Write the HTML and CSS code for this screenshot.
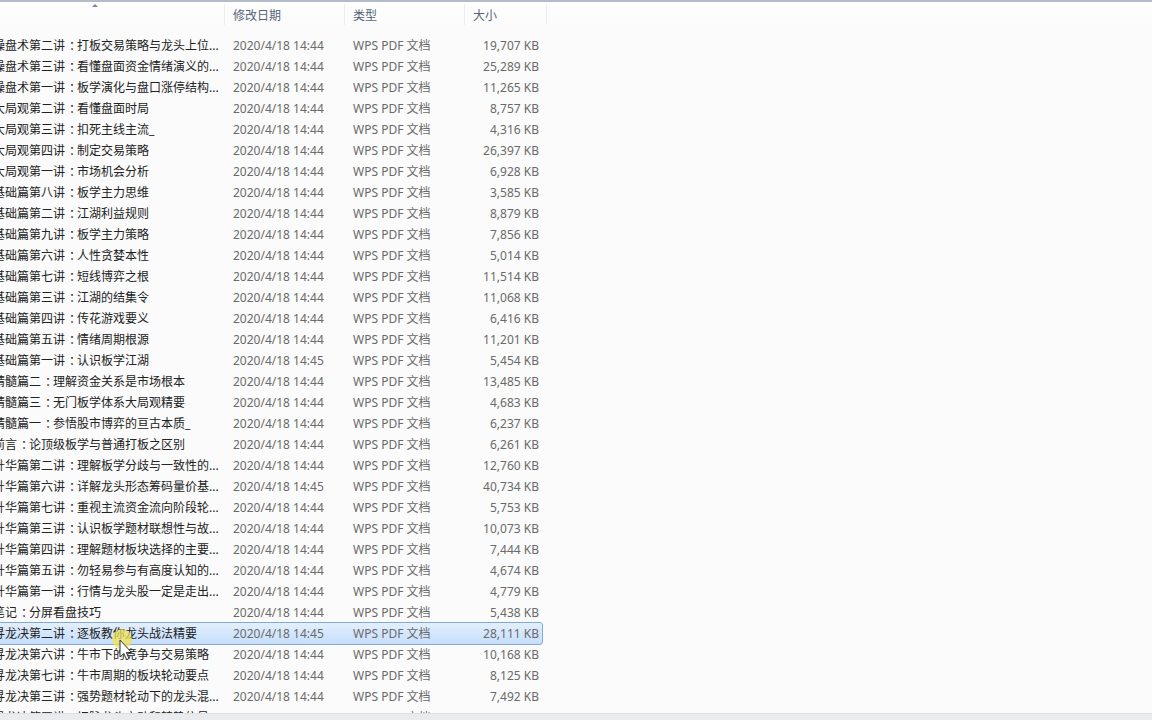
FILE: index.html
```html
<!DOCTYPE html>
<html lang="zh">
<head>
    <meta charset="UTF-8">
    <title>文件列表</title>
    <link rel="stylesheet" href="styles.css">
</head>
<body>
    <div class="explorer">
        <!-- 列标题 -->
        <div class="header">
            <div class="hcell name"><span class="sort-arrow"></span></div>
            <div class="hcell date">修改日期</div>
            <div class="hcell type">类型</div>
            <div class="hcell size">大小</div>
        </div>

        <div class="list">
            <div class="row"><div class="name"><span>操盘术第二讲<i>：</i>打板交易策略与龙头上位...</span></div><div class="date">2020/4/18 14:44</div><div class="type">WPS PDF 文档</div><div class="size">19,707 KB</div></div>
            <div class="row"><div class="name"><span>操盘术第三讲<i>：</i>看懂盘面资金情绪演义的...</span></div><div class="date">2020/4/18 14:44</div><div class="type">WPS PDF 文档</div><div class="size">25,289 KB</div></div>
            <div class="row"><div class="name"><span>操盘术第一讲<i>：</i>板学演化与盘口涨停结构...</span></div><div class="date">2020/4/18 14:44</div><div class="type">WPS PDF 文档</div><div class="size">11,265 KB</div></div>
            <div class="row"><div class="name"><span>大局观第二讲<i>：</i>看懂盘面时局</span></div><div class="date">2020/4/18 14:44</div><div class="type">WPS PDF 文档</div><div class="size">8,757 KB</div></div>
            <div class="row"><div class="name"><span>大局观第三讲<i>：</i>扣死主线主流_</span></div><div class="date">2020/4/18 14:44</div><div class="type">WPS PDF 文档</div><div class="size">4,316 KB</div></div>
            <div class="row"><div class="name"><span>大局观第四讲<i>：</i>制定交易策略</span></div><div class="date">2020/4/18 14:44</div><div class="type">WPS PDF 文档</div><div class="size">26,397 KB</div></div>
            <div class="row"><div class="name"><span>大局观第一讲<i>：</i>市场机会分析</span></div><div class="date">2020/4/18 14:44</div><div class="type">WPS PDF 文档</div><div class="size">6,928 KB</div></div>
            <div class="row"><div class="name"><span>基础篇第八讲<i>：</i>板学主力思维</span></div><div class="date">2020/4/18 14:44</div><div class="type">WPS PDF 文档</div><div class="size">3,585 KB</div></div>
            <div class="row"><div class="name"><span>基础篇第二讲<i>：</i>江湖利益规则</span></div><div class="date">2020/4/18 14:44</div><div class="type">WPS PDF 文档</div><div class="size">8,879 KB</div></div>
            <div class="row"><div class="name"><span>基础篇第九讲<i>：</i>板学主力策略</span></div><div class="date">2020/4/18 14:44</div><div class="type">WPS PDF 文档</div><div class="size">7,856 KB</div></div>
            <div class="row"><div class="name"><span>基础篇第六讲<i>：</i>人性贪婪本性</span></div><div class="date">2020/4/18 14:44</div><div class="type">WPS PDF 文档</div><div class="size">5,014 KB</div></div>
            <div class="row"><div class="name"><span>基础篇第七讲<i>：</i>短线博弈之根</span></div><div class="date">2020/4/18 14:44</div><div class="type">WPS PDF 文档</div><div class="size">11,514 KB</div></div>
            <div class="row"><div class="name"><span>基础篇第三讲<i>：</i>江湖的结集令</span></div><div class="date">2020/4/18 14:44</div><div class="type">WPS PDF 文档</div><div class="size">11,068 KB</div></div>
            <div class="row"><div class="name"><span>基础篇第四讲<i>：</i>传花游戏要义</span></div><div class="date">2020/4/18 14:44</div><div class="type">WPS PDF 文档</div><div class="size">6,416 KB</div></div>
            <div class="row"><div class="name"><span>基础篇第五讲<i>：</i>情绪周期根源</span></div><div class="date">2020/4/18 14:44</div><div class="type">WPS PDF 文档</div><div class="size">11,201 KB</div></div>
            <div class="row"><div class="name"><span>基础篇第一讲<i>：</i>认识板学江湖</span></div><div class="date">2020/4/18 14:45</div><div class="type">WPS PDF 文档</div><div class="size">5,454 KB</div></div>
            <div class="row"><div class="name"><span>精髓篇二<i>：</i>理解资金关系是市场根本</span></div><div class="date">2020/4/18 14:44</div><div class="type">WPS PDF 文档</div><div class="size">13,485 KB</div></div>
            <div class="row"><div class="name"><span>精髓篇三<i>：</i>无门板学体系大局观精要</span></div><div class="date">2020/4/18 14:44</div><div class="type">WPS PDF 文档</div><div class="size">4,683 KB</div></div>
            <div class="row"><div class="name"><span>精髓篇一<i>：</i>参悟股市博弈的亘古本质_</span></div><div class="date">2020/4/18 14:44</div><div class="type">WPS PDF 文档</div><div class="size">6,237 KB</div></div>
            <div class="row"><div class="name"><span>前言<i>：</i>论顶级板学与普通打板之区别</span></div><div class="date">2020/4/18 14:44</div><div class="type">WPS PDF 文档</div><div class="size">6,261 KB</div></div>
            <div class="row"><div class="name"><span>升华篇第二讲<i>：</i>理解板学分歧与一致性的...</span></div><div class="date">2020/4/18 14:44</div><div class="type">WPS PDF 文档</div><div class="size">12,760 KB</div></div>
            <div class="row"><div class="name"><span>升华篇第六讲<i>：</i>详解龙头形态筹码量价基...</span></div><div class="date">2020/4/18 14:45</div><div class="type">WPS PDF 文档</div><div class="size">40,734 KB</div></div>
            <div class="row"><div class="name"><span>升华篇第七讲<i>：</i>重视主流资金流向阶段轮...</span></div><div class="date">2020/4/18 14:44</div><div class="type">WPS PDF 文档</div><div class="size">5,753 KB</div></div>
            <div class="row"><div class="name"><span>升华篇第三讲<i>：</i>认识板学题材联想性与故...</span></div><div class="date">2020/4/18 14:44</div><div class="type">WPS PDF 文档</div><div class="size">10,073 KB</div></div>
            <div class="row"><div class="name"><span>升华篇第四讲<i>：</i>理解题材板块选择的主要...</span></div><div class="date">2020/4/18 14:44</div><div class="type">WPS PDF 文档</div><div class="size">7,444 KB</div></div>
            <div class="row"><div class="name"><span>升华篇第五讲<i>：</i>勿轻易参与有高度认知的...</span></div><div class="date">2020/4/18 14:44</div><div class="type">WPS PDF 文档</div><div class="size">4,674 KB</div></div>
            <div class="row"><div class="name"><span>升华篇第一讲<i>：</i>行情与龙头股一定是走出...</span></div><div class="date">2020/4/18 14:44</div><div class="type">WPS PDF 文档</div><div class="size">4,779 KB</div></div>
            <div class="row"><div class="name"><span>笔记<i>：</i>分屏看盘技巧</span></div><div class="date">2020/4/18 14:44</div><div class="type">WPS PDF 文档</div><div class="size">5,438 KB</div></div>
            <div class="row selected"><div class="name"><span>寻龙决第二讲<i>：</i>逐板教你龙头战法精要</span></div><div class="date">2020/4/18 14:45</div><div class="type">WPS PDF 文档</div><div class="size">28,111 KB</div></div>
            <div class="row"><div class="name"><span>寻龙决第六讲<i>：</i>牛市下的竞争与交易策略</span></div><div class="date">2020/4/18 14:44</div><div class="type">WPS PDF 文档</div><div class="size">10,168 KB</div></div>
            <div class="row"><div class="name"><span>寻龙决第七讲<i>：</i>牛市周期的板块轮动要点</span></div><div class="date">2020/4/18 14:44</div><div class="type">WPS PDF 文档</div><div class="size">8,125 KB</div></div>
            <div class="row"><div class="name"><span>寻龙决第三讲<i>：</i>强势题材轮动下的龙头混...</span></div><div class="date">2020/4/18 14:44</div><div class="type">WPS PDF 文档</div><div class="size">7,492 KB</div></div>
            <div class="row"><div class="name"><span>寻龙决第四讲<i>：</i>把脉龙头启动和转势信号</span></div><div class="date">2020/4/18 14:44</div><div class="type">WPS PDF 文档</div><div class="size">10,346 KB</div></div>
        </div>

        <div class="status"></div>
    </div>

    <!-- 录屏鼠标指针 -->
    <div class="cursor">
        <svg width="30" height="38" viewBox="0 0 30 38">
            <circle cx="12" cy="11" r="10" fill="#f3e24a" fill-opacity="0.7"/>
            <path d="M10 12 L10 29 L13.8 25.4 L16.6 31.6 L19 30.5 L16.3 24.5 L21.6 24.5 Z" fill="#ffffff" stroke="#333" stroke-width="1" stroke-linejoin="round"/>
        </svg>
    </div>
</body>
</html>
```

FILE: styles.css
```css
body {
    margin: 0;
    background-color: #fafbfa;
    font-family: 'Noto Sans', 'Noto Sans CJK SC', sans-serif;
    font-size: 12px;
    overflow: hidden;
}
.explorer {
    width: 1152px;
    height: 720px;
    display: flex;
    flex-direction: column;
}
.header {
    display: flex;
    height: 26px;
    border-top: 2px solid #b3bcc8;
    background: linear-gradient(#fdfdfe, #fafbfa);
    color: #56647a;
}
.hcell {
    position: relative;
    box-sizing: border-box;
    padding-left: 8px;
    border-right: 1px solid #eaedf1;
    margin: 2px 0 3px;
    line-height: 24px;
}
.hcell.name {
    width: 225px;
}
.hcell.date,
.hcell.type {
    width: 120px;
}
.hcell.size {
    width: 82px;
}
.sort-arrow {
    position: absolute;
    left: 92px;
    top: 0;
    width: 0;
    height: 0;
    border-left: 3px solid transparent;
    border-right: 3px solid transparent;
    border-bottom: 3px solid #7b879a;
}
.list {
    flex: 1;
    overflow: hidden;
    padding-top: 7px;
}
.row {
    position: relative;
    z-index: 0;
    display: flex;
    width: 547px;
    height: 21px;
    line-height: 21px;
    white-space: nowrap;
    color: #6a6a6a;
}
.row.selected::before {
    content: "";
    position: absolute;
    z-index: -1;
    top: -1px;
    bottom: -1px;
    left: -4px;
    right: 4px;
    border: 1px solid #84a9d6;
    border-radius: 3px;
    background: linear-gradient(#e3effd, #c6defb);
}
.row .name {
    width: 225px;
    overflow: hidden;
    color: #222;
}
.row .name span {
    margin-left: -7px;
}
/* 全角冒号居中 */
.row .name i {
    font-style: normal;
    padding-left: 4px;
    margin-right: -4px;
}
.row .date,
.row .type {
    box-sizing: border-box;
    width: 120px;
    padding-left: 8px;
}
.row .size {
    box-sizing: border-box;
    width: 82px;
    padding-right: 8px;
    text-align: right;
}
.status {
    height: 6px;
    background-color: #e9ebee;
    border-top: 1px solid #dde0e5;
}
.cursor {
    position: absolute;
    left: 110px;
    top: 628px;
}
```
